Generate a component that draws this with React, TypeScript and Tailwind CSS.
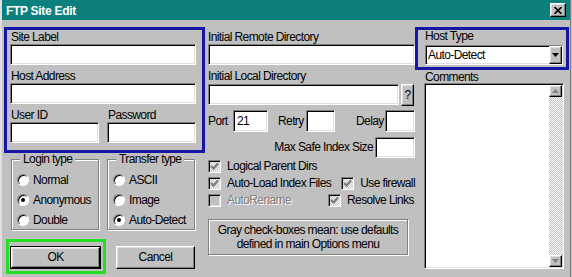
import React from 'react'

const sunken =
  'border border-t-[#808080] border-l-[#808080] border-b-white border-r-white shadow-[inset_1px_1px_0_#000,inset_-1px_-1px_0_#dfdfdf]'
const raised =
  'border border-t-white border-l-white border-b-black border-r-black shadow-[inset_-1px_-1px_0_#808080,inset_1px_1px_0_#dfdfdf]'
const etched = 'border border-[#808080] shadow-[inset_1px_1px_0_#fff,1px_1px_0_#fff]'
const checker = 'bg-[repeating-conic-gradient(#c0c0c0_0_25%,#fff_0_50%)] bg-[length:2px_2px]'

function TextBox({ className = '', value = '' }: { className?: string; value?: string }) {
  return (
    <div className={`${sunken} bg-white h-[21px] flex items-center pl-[3px] ${className}`}>
      {value}
    </div>
  )
}

function Radio({ label, checked = false }: { label: string; checked?: boolean }) {
  return (
    <div className="h-[20px] flex items-center gap-[4px] whitespace-nowrap">
      <span className="w-[12px] h-[12px] shrink-0 rounded-full border border-t-[#808080] border-l-[#808080] border-b-white border-r-white bg-white shadow-[inset_1px_1px_0_#000] flex items-center justify-center">
        {checked && <span className="w-[4px] h-[4px] rounded-full bg-black" />}
      </span>
      <span>{label}</span>
    </div>
  )
}

function Check({ label, disabled = false }: { label: string; disabled?: boolean }) {
  return (
    <div className="flex items-center gap-[6px] h-[17px] whitespace-nowrap">
      <span
        className={`w-[13px] h-[13px] shrink-0 ${sunken} ${disabled ? 'bg-[#c0c0c0]' : checker} flex items-center justify-center`}
      >
        {!disabled && (
          <svg width="9" height="9" viewBox="0 0 9 9">
            <path d="M1 4 L3.5 6.5 L8 1.5" stroke="#7a7a7a" strokeWidth="2" fill="none" />
          </svg>
        )}
      </span>
      <span className={disabled ? 'text-[#808080] [text-shadow:1px_1px_0_#fff]' : ''}>{label}</span>
    </div>
  )
}

export default function App() {
  return (
    <div className="w-[572px] h-[277px] bg-[#c0c0c0] overflow-hidden font-['Liberation_Sans',Arial,sans-serif] text-[12px] tracking-[-0.6px] text-black leading-[13px]">
      <div className="w-[571px] h-[277px] border-l-2 border-l-[#dfdfdf] border-r border-r-[#808080] flex flex-col">
        {/* title bar */}
        <div className="h-[20px] shrink-0 bg-[#0b807d] flex items-center justify-between pl-[4px] pr-[4px]">
          <span className="text-white font-bold text-[12px] tracking-[-0.3px] pt-[2px]">FTP Site Edit</span>
          <button className={`${raised} bg-[#c0c0c0] w-[16px] h-[14px] flex items-center justify-center`}>
            <svg width="8" height="7" viewBox="0 0 8 7">
              <path d="M0.5 0 L7.5 7 M7.5 0 L0.5 7" stroke="#000" strokeWidth="1.6" />
            </svg>
          </button>
        </div>

        <div className="flex flex-1">
          {/* left column */}
          <div className="ml-[2px] w-[201px] flex flex-col">
            <div className="mt-[7px] h-[126px] border-[3px] border-[#1515a6] pl-[3px] pr-[6px] pt-px flex flex-col">
              <span className="pl-px">Site Label</span>
              <TextBox />
              <span className="pl-px mt-[5px]">Host Address</span>
              <TextBox />
              <div className="flex justify-between mt-[5px]">
                <div className="w-[89px] flex flex-col">
                  <span className="pl-px">User ID</span>
                  <TextBox />
                </div>
                <div className="w-[89px] flex flex-col">
                  <span className="pl-px">Password</span>
                  <TextBox />
                </div>
              </div>
            </div>

            <div className="flex gap-[8px] pl-[7px]">
              <fieldset className={`${etched} w-[88px] h-[77px] pl-[5px]`}>
                <legend className="ml-[3px] px-[3px] bg-[#c0c0c0]">Login type</legend>
                <div className="pt-[4px]">
                  <Radio label="Normal" />
                  <Radio label="Anonymous" checked />
                  <Radio label="Double" />
                </div>
              </fieldset>
              <fieldset className={`${etched} w-[88px] h-[77px] pl-[5px]`}>
                <legend className="ml-[3px] px-[3px] bg-[#c0c0c0]">Transfer type</legend>
                <div className="pt-[4px]">
                  <Radio label="ASCII" />
                  <Radio label="Image" />
                  <Radio label="Auto-Detect" checked />
                </div>
              </fieldset>
            </div>

            <div className="flex items-start mt-[9px] ml-[2px]">
              <div className="w-[100px] h-[35px] border-[3px] border-[#22e022] pl-px pt-[4px]">
                <button className="w-[91px] h-[23px] border border-black bg-[#c0c0c0]">
                  <span className={`${raised} w-full h-full flex items-center justify-center`}>OK</span>
                </button>
              </div>
              <button
                className={`${raised} bg-[#c0c0c0] ml-[10px] mt-[7px] w-[79px] h-[23px] flex items-center justify-center`}
              >
                Cancel
              </button>
            </div>
          </div>

          {/* middle column */}
          <div className="ml-[3px] w-[207px] flex flex-col pt-[11px]">
            <span>Initial Remote Directory</span>
            <TextBox className="w-full" />
            <span className="mt-[5px]">Initial Local Directory</span>
            <div className="flex items-start mt-px">
              <TextBox className="w-[191px]" />
              <button className={`${raised} bg-[#c0c0c0] ml-[2px] w-[13px] h-[22px] flex items-center justify-center`}>
                ?
              </button>
            </div>
            <div className="flex items-center mt-[4px] h-[22px]">
              <span className="w-[25px]">Port</span>
              <TextBox className="w-[35px] !h-[22px]" value="21" />
              <span className="ml-[10px] w-[28px]">Retry</span>
              <TextBox className="w-[29px] !h-[22px]" />
              <span className="ml-[21px] w-[29px]">Delay</span>
              <TextBox className="w-[30px] !h-[22px]" />
            </div>
            <div className="flex items-center justify-end gap-[2px] mt-[5px]">
              <span>Max Safe Index Size</span>
              <TextBox className="w-[40px]" />
            </div>
            <Check label="Logical Parent Dirs" />
            <div className="flex">
              <div className="w-[135px]">
                <Check label="Auto-Load Index Files" />
              </div>
              <Check label="Use firewall" />
            </div>
            <div className="flex">
              <div className="w-[120px]">
                <Check label="AutoRename" disabled />
              </div>
              <Check label="Resolve Links" />
            </div>
            <div className={`${etched} mt-[10px] w-[200px] h-[36px] flex flex-col items-center justify-center leading-[14px]`}>
              <span>Gray check-boxes mean: use defaults</span>
              <span>defined in main Options menu</span>
            </div>
          </div>

          {/* right column */}
          <div className="w-[154px] flex flex-col">
            <div className="mt-[7px] h-[43px] border-[3px] border-[#1515a6] pl-[4px] pr-[3px] flex flex-col">
              <span className="pl-[3px]">Host Type</span>
              <div className={`${sunken} bg-white mt-[2px] ml-[3px] h-[20px] flex items-center pl-[2px]`}>
                <span>Auto-Detect</span>
                <span className={`${raised} bg-[#c0c0c0] ml-auto w-[13px] h-full flex items-center justify-center`}>
                  <svg width="7" height="4" viewBox="0 0 7 4">
                    <path d="M0 0 H7 L3.5 4 Z" fill="#000" />
                  </svg>
                </span>
              </div>
            </div>
            <span className="mt-[2px] pl-[10px] leading-[11px]">Comments</span>
            <div className={`${sunken} bg-white ml-[9px] w-[140px] h-[186px] p-px flex`}>
              <div className="flex-1" />
              <div className="w-[13px] flex flex-col">
                <span className={`${raised} bg-[#c0c0c0] h-[12px] flex items-center justify-center`}>
                  <svg width="7" height="4" viewBox="0 0 7 4">
                    <path d="M0 4 H7 L3.5 0 Z" fill="#808080" />
                  </svg>
                </span>
                <div className={`flex-1 ${checker}`} />
                <span className={`${raised} bg-[#c0c0c0] h-[12px] flex items-center justify-center`}>
                  <svg width="7" height="4" viewBox="0 0 7 4">
                    <path d="M0 0 H7 L3.5 4 Z" fill="#808080" />
                  </svg>
                </span>
              </div>
            </div>
          </div>
        </div>
      </div>
    </div>
  )
}
